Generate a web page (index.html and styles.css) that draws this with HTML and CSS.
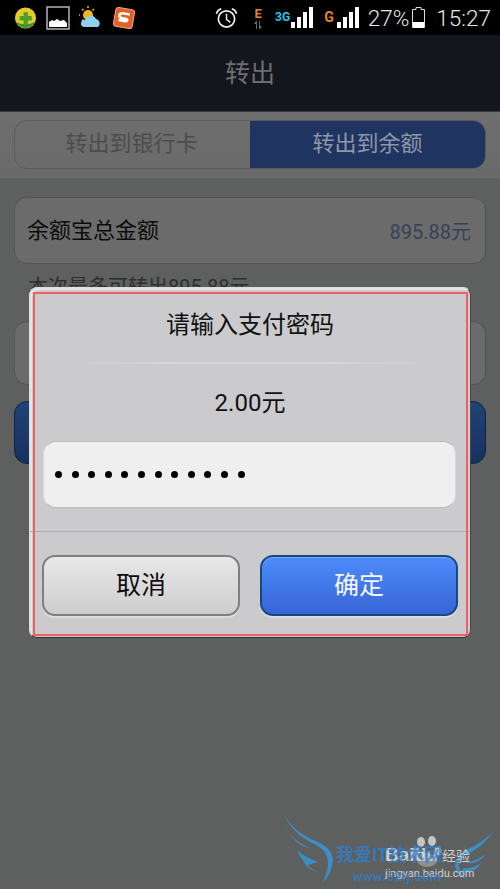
FILE: index.html
```html
<!DOCTYPE html>
<html lang="zh-CN">
<head>
  <meta charset="UTF-8">
  <meta name="viewport" content="width=device-width, initial-scale=1.0">
  <title>转出</title>
  <link rel="stylesheet" href="styles.css">
</head>
<body>
  <div class="screen">
    <div class="status-bar">
      <div class="status-left">
        <svg class="ico" width="23" height="24" viewBox="0 0 24 24">
          <circle cx="12" cy="12" r="11" fill="#e0cc2a"/>
          <path d="M2 16a11 11 0 0 0 20 0a16 12 0 0 1-20 0z" fill="#3a9430"/>
          <path d="M10 6h4.500v4h4v4.500h-4v4h-4.500v-4h-4v-4.500h4z" fill="#4d9f2c"/>
        </svg>
        <svg class="ico" width="24" height="24" viewBox="0 0 24 24">
          <rect x="1" y="1" width="22" height="22" fill="#000" stroke="#b5b5b5" stroke-width="1.500"/>
          <path d="M3 21v-5l3-2 2 1 3-2 3 2 4-1 3 3v4z" fill="#fff"/>
        </svg>
        <svg class="ico" width="24" height="24" viewBox="0 0 24 24">
          <circle cx="9" cy="9" r="5" fill="#f5b324"/>
          <path d="M9 0v2M1 9H0M3 3l1.500 1.500M15 3l-1.500 1.500M3 15l1.500-1.500" stroke="#f5b324" stroke-width="1.500"/>
          <path d="M5 21a3.500 3.500 0 0 1 1-7a6 6 0 0 1 11-1a4.500 4.500 0 0 1 2 8z" fill="#8dd0f0"/>
        </svg>
        <svg class="ico" width="24" height="24" viewBox="0 0 24 24">
          <rect x="2.500" y="2.500" width="19" height="19" rx="3" fill="#e4602a" stroke="#f3a37e" transform="rotate(10 12 12)"/>
          <path d="M17 7.500H9.500q-2.500.5-2.500 2.500t2.500 2.500h5q1.500.5 1 1.500t-2 1H7" fill="none" stroke="#fff" stroke-width="2.500" transform="rotate(10 12 12)"/>
        </svg>
      </div>
      <div class="status-right">
        <svg class="alarm" width="23" height="22" viewBox="0 0 24 22">
          <circle cx="12" cy="12" r="8.500" fill="none" stroke="#eee" stroke-width="1.800"/>
          <path d="M12 6.500v6l4 3" fill="none" stroke="#eee" stroke-width="1.500"/>
          <path d="M1.500 6.500q1-4 5-5M22.500 6.500q-1-4-5-5" fill="none" stroke="#eee" stroke-width="1.800"/>
        </svg>
        <div class="net-e">
          <span>E</span>
          <svg width="8" height="8" viewBox="0 0 8 8"><path d="M0 3l2-3h1v8H2V3zM5 0h1v5h2l-2 3H5z" fill="#666"/></svg>
        </div>
        <span class="net-label net-3g">3G</span>
        <svg class="bars" width="22" height="21" viewBox="0 0 22 21"><path d="M0 15h4v6H0zM6 10h4v11H6zM12 5h4v16h-4zM18 0h4v21h-4z" fill="#fff"/></svg>
        <span class="net-label net-g">G</span>
        <svg class="bars" width="22" height="21" viewBox="0 0 22 21"><path d="M0 15h4v6H0zM6 10h4v11H6zM12 5h4v16h-4zM18 0h4v21h-4z" fill="#fff"/></svg>
        <span class="percent">27%</span>
        <svg class="battery" width="13" height="21" viewBox="0 0 13 21">
          <path d="M4 .500h5v2h3.500v18H.500v-18H4z" fill="none" stroke="#ddd"/>
          <rect x="1" y="15" width="11" height="6" fill="#fff"/>
        </svg>
        <span class="clock">15:27</span>
      </div>
    </div>

    <div class="title-bar">转出</div>

    <div class="tab-band">
      <div class="tabs">
        <div class="tab tab-off">转出到银行卡</div>
        <div class="tab tab-on">转出到余额</div>
      </div>
    </div>

    <div class="content">
      <div class="row">
        <span class="row-label">余额宝总金额</span>
        <span class="amount">895.88元</span>
      </div>
      <p class="hint">本次最多可转出895.88元</p>
      <div class="field"></div>
      <div class="submit"></div>
    </div>

    <div class="dialog">
      <div class="dialog-title">请输入支付密码</div>
      <div class="rule"></div>
      <div class="dialog-amount">2.00元</div>
      <div class="pass">
        <i></i><i></i><i></i><i></i><i></i><i></i><i></i><i></i><i></i><i></i><i></i><i></i>
      </div>
      <div class="dialog-line"></div>
      <div class="dialog-btns">
        <div class="btn btn-cancel">取消</div>
        <div class="btn btn-ok">确定</div>
      </div>
      <div class="red-mark"></div>
    </div>

    <div class="watermark">
      <svg class="wings" width="230" height="89" viewBox="0 0 230 89">
        <g fill="#3b8fc8">
          <path d="M13 12Q22 32 48 42Q66 50 62 66Q60 76 52 83Q58 72 58 64Q58 50 44 44Q22 34 13 12z"/>
          <path d="M14 23Q20 40 40 48Q24 46 14 23z"/>
          <path d="M27 50Q36 58 48 62L38 65Q40 69 50 73Q38 70 34 62Q30 57 27 50z"/>
          <path d="M225 30Q212 48 194 56Q186 62 190 70Q192 76 198 80Q186 74 185 66Q186 56 196 50Q214 42 225 30z"/>
          <path d="M216 54Q208 65 196 63Q208 60 216 54z"/>
          <path d="M211 63Q206 72 196 72Q190 72 194 68Q204 69 211 63z"/>
        </g>
        <g fill="#c4c4c4">
          <ellipse cx="151" cy="42" rx="4" ry="5"/>
          <ellipse cx="162" cy="41" rx="4" ry="5"/>
          <ellipse cx="146" cy="52" rx="3.500" ry="4.500"/>
          <ellipse cx="168" cy="51" rx="3.500" ry="4.500"/>
        </g>
        <ellipse cx="157" cy="60" rx="10" ry="7" fill="#8f8f8f"/>
      </svg>
      <span class="wm-baidu">Baidu</span>
      <span class="wm-jingyan">经验</span>
      <span class="wm-domain">jingyan.baidu.com</span>
      <span class="wm-site">我爱IT技术网</span>
      <span class="wm-url">www.52ij.com</span>
    </div>
  </div>
</body>
</html>
```

FILE: styles.css
```css
* {
  margin: 0;
  padding: 0;
  box-sizing: border-box;
  font-family: Roboto, 'Noto Sans CJK SC', sans-serif;
}

body {
  background-color: #5e605f;
}

.screen {
  position: relative;
  width: 500px;
  height: 889px;
  overflow: hidden;
  background-color: #5e605f;
}

/* status bar */
.status-bar {
  height: 35px;
  background-color: #000;
  display: flex;
  justify-content: space-between;
  align-items: center;
  padding: 0 9px 0 14px;
}

.status-left {
  display: flex;
  align-items: center;
  gap: 9px;
}

.status-right {
  display: flex;
  align-items: center;
  color: #e8e8e8;
}

.alarm {
  margin-right: 16px;
}

.net-e {
  display: flex;
  flex-direction: column;
  align-items: center;
  width: 8px;
  margin-right: 13px;
  color: #e8832a;
  font-size: 13px;
  font-weight: 700;
  line-height: 14px;
}

.net-label {
  align-self: flex-start;
  margin-top: 5px;
  font-size: 12px;
  font-weight: 700;
  line-height: 14px;
}

.net-3g {
  color: #22c4e8;
  margin-right: 1px;
}

.net-g {
  color: #e8832a;
  font-size: 14px;
  margin: 5px 3px 0 11px;
}

.percent {
  margin-left: 9px;
  font-size: 22.500px;
  font-weight: 300;
}

.battery {
  margin: 0 11px 0 3px;
}

.clock {
  font-size: 22.500px;
  font-weight: 300;
}

/* header */
.title-bar {
  height: 76px;
  background-color: #14161d;
  color: #6e6e6e;
  font-size: 25px;
  line-height: 77px;
  text-align: center;
}

.tab-band {
  height: 67px;
  padding: 8px 14px 0;
  border-top: 1px solid #3c3e42;
  background: linear-gradient(#6e6e6e, #6a6a6a);
}

.tabs {
  display: flex;
  height: 49px;
  border: 1px solid #5a5a5a;
  border-radius: 13px;
  overflow: hidden;
}

.tab {
  flex: 1;
  color: #4c4c4c;
  font-size: 22px;
  line-height: 46px;
  text-align: center;
}

.tab-off {
  text-indent: -2px;
}

.tab-on {
  background-color: #1f3460;
  color: #8f97a8;
}

/* page behind the dialog */
.content {
  padding: 19px 14px 0;
}

.row {
  height: 67px;
  display: flex;
  justify-content: space-between;
  align-items: center;
  padding: 0 14px 0 12px;
  border: 1.500px solid #545454;
  border-radius: 13px;
  background-color: #6b6b6b;
  color: #0c0c0c;
  font-size: 22px;
}

.row-label {
  margin-bottom: 5px;
}

.amount {
  color: #38415a;
  font-size: 20px;
}

.hint {
  padding-left: 14px;
  margin-top: 8px;
  color: #2e2e2e;
  font-size: 20px;
  line-height: 30px;
}

.field {
  height: 64px;
  margin-top: 19px;
  border: 1.500px solid #545454;
  border-radius: 13px;
  background-color: #6b6b6b;
}

.submit {
  height: 63px;
  margin-top: 16px;
  border: 1px solid #10233f;
  border-radius: 13px;
  background: linear-gradient(#1e4377, #17305e);
}

/* dialog */
.dialog {
  position: absolute;
  left: 29px;
  top: 287px;
  width: 442px;
  height: 351px;
  padding-top: 1px;
  background-color: #cbcbcd;
  border: 1px solid #4a4a4a;
  border-top-color: #ddd;
  border-left-color: #ddd;
  border-bottom-color: #333;
  border-radius: 8px;
  box-shadow: inset 2px 2px 0 #e4e4e4;
  display: flex;
  flex-direction: column;
  align-items: center;
}

.dialog-title {
  height: 73px;
  color: #111;
  font-size: 24px;
  line-height: 72px;
}

.rule {
  width: 356px;
  height: 2px;
  background: linear-gradient(to right, #cbcbcd, #d8d8d9 30%, #d8d8d9 70%, #cbcbcd);
}

.dialog-amount {
  height: 77px;
  color: #111;
  font-size: 24px;
  line-height: 78px;
}

.pass {
  width: 413px;
  height: 67px;
  margin-right: 1px;
  padding-left: 11px;
  display: flex;
  align-items: center;
  gap: 9.600px;
  background-color: #efefef;
  border: 1px solid #d8d8d8;
  border-top-color: #bdbdbd;
  border-bottom-color: #bdbdbd;
  border-radius: 13px;
}

.pass i {
  width: 7px;
  height: 7px;
  border-radius: 50%;
  background-color: #000;
}

.dialog-line {
  align-self: stretch;
  height: 1px;
  margin-top: 23px;
  background-color: #adadad;
}

.dialog-btns {
  width: 416px;
  margin-top: 23px;
  display: flex;
  justify-content: space-between;
}

.btn {
  width: 198px;
  height: 61px;
  border-radius: 13px;
  font-size: 25px;
  line-height: 57px;
  text-align: center;
}

.btn-cancel {
  border: 2px solid #7f7f7f;
  background: linear-gradient(#e8e8e8, #cdcdcd);
  color: #0c0c0c;
  box-shadow: 0 2px 0 #dedee0;
}

.btn-ok {
  border: 2px solid #144a80;
  background: linear-gradient(#4d8cfb, #3864d4);
  color: #f4f6fb;
  box-shadow: inset 0 1px 0 #76a6fb, 0 2px 0 #dedee0;
}

.red-mark {
  position: absolute;
  left: 3px;
  top: 4px;
  width: 435px;
  height: 344px;
  border: 2px solid #ec6066;
}

/* watermark */
.watermark {
  position: absolute;
  left: 270px;
  top: 800px;
  width: 230px;
  height: 89px;
}

.wings {
  display: block;
}

.watermark span {
  position: absolute;
  white-space: nowrap;
}

.wm-baidu {
  left: 115px;
  top: 44px;
  color: #d0d0d0;
  font-family: 'Liberation Sans', sans-serif;
  font-size: 19px;
  font-weight: 700;
  line-height: 22px;
}

.wm-jingyan {
  left: 172px;
  top: 47px;
  color: #d0d0d0;
  font-size: 14px;
  line-height: 18px;
}

.wm-domain {
  left: 115px;
  top: 67px;
  color: #d0d0d0;
  font-size: 11px;
  line-height: 14px;
}

.wm-site {
  left: 66px;
  top: 44px;
  color: #2f7fd0;
  opacity: 0.75;
  font-size: 18px;
  font-weight: 700;
  line-height: 22px;
}

.wm-url {
  left: 83px;
  top: 70px;
  color: #2f7fd0;
  opacity: 0.7;
  font-size: 13px;
  font-weight: 700;
  line-height: 14px;
  letter-spacing: 0.5px;
}
```
